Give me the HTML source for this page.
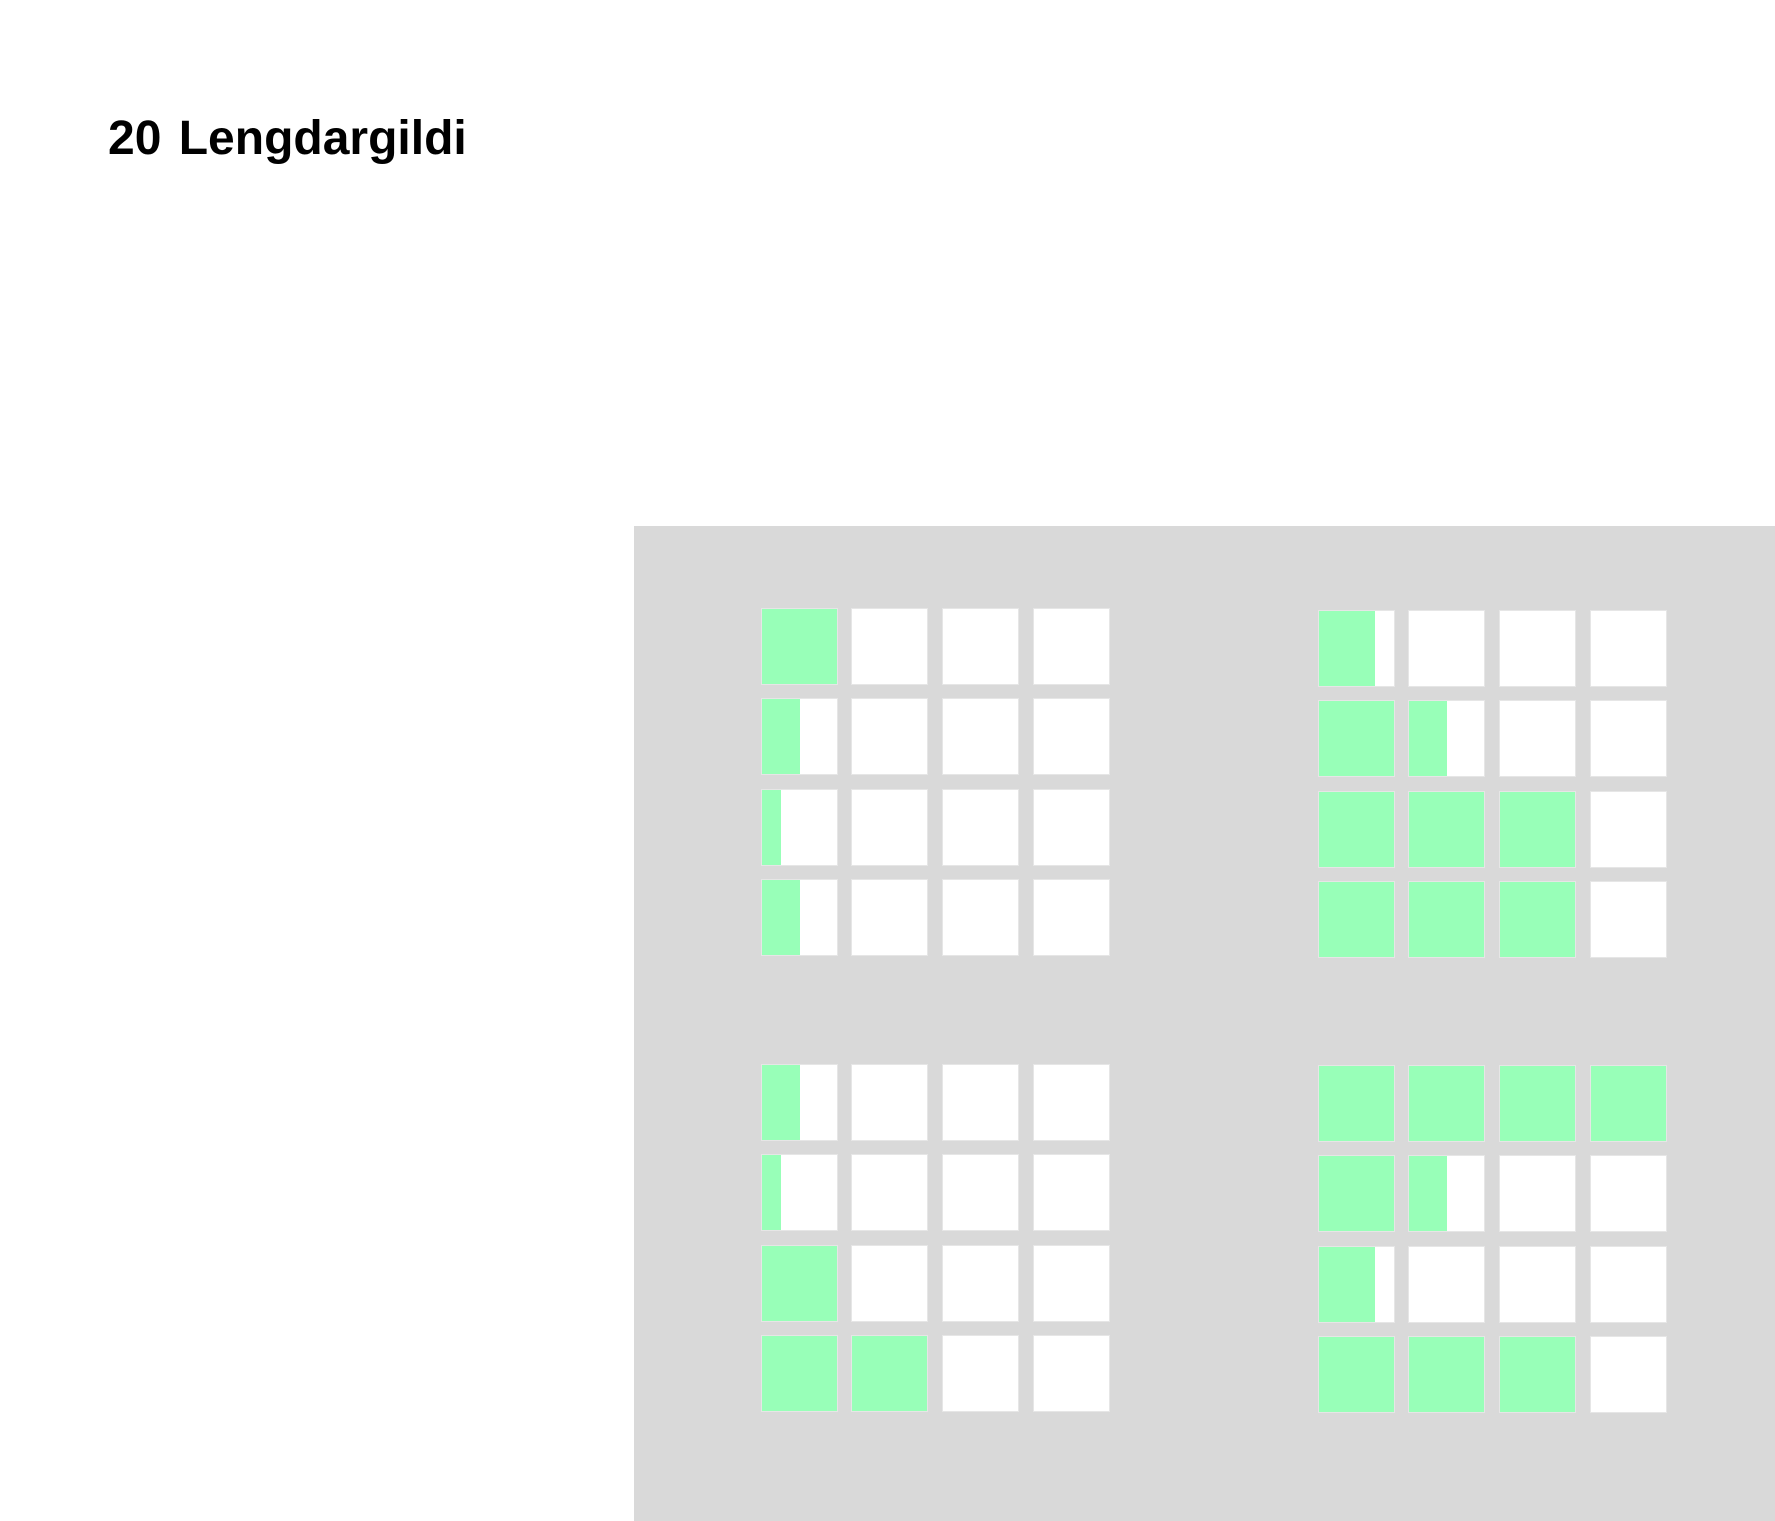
<!DOCTYPE html>
<html><head><meta charset="utf-8"><style>
html,body{margin:0;padding:0;background:#fff;width:1775px;height:1521px;overflow:hidden;position:relative}
h1{position:absolute;left:108px;top:109px;margin:0;font:bold 48px/60px "Liberation Sans",sans-serif;color:#000;word-spacing:4px}
.bg{position:absolute;left:634px;top:526px;right:0;bottom:0;background:#d9d9d9}
.g{position:absolute;width:360px;height:360px}
.c{position:absolute;width:77px;height:77px;background:#fff;box-sizing:border-box;border:1px solid #e6e6e6;overflow:hidden}
.c i{position:absolute;left:0;top:0;bottom:0;background:#98ffb8}
.c0{left:0}.c1{left:90px}.c2{left:181px}.c3{left:272px}
.r0{top:0}.r1{top:90px}.r2{top:181px}.r3{top:271px}
</style></head><body>
<h1>20 Lengdargildi</h1>
<div class="bg"></div>

<div class="g" style="left:761px;top:608px">
<div class="c c0 r0"><i style="width:100%"></i></div><div class="c c1 r0"></div><div class="c c2 r0"></div><div class="c c3 r0"></div>
<div class="c c0 r1"><i style="width:50%"></i></div><div class="c c1 r1"></div><div class="c c2 r1"></div><div class="c c3 r1"></div>
<div class="c c0 r2"><i style="width:25%"></i></div><div class="c c1 r2"></div><div class="c c2 r2"></div><div class="c c3 r2"></div>
<div class="c c0 r3"><i style="width:50%"></i></div><div class="c c1 r3"></div><div class="c c2 r3"></div><div class="c c3 r3"></div>
</div>

<div class="g" style="left:1318px;top:610px">
<div class="c c0 r0"><i style="width:75%"></i></div><div class="c c1 r0"></div><div class="c c2 r0"></div><div class="c c3 r0"></div>
<div class="c c0 r1"><i style="width:100%"></i></div><div class="c c1 r1"><i style="width:50%"></i></div><div class="c c2 r1"></div><div class="c c3 r1"></div>
<div class="c c0 r2"><i style="width:100%"></i></div><div class="c c1 r2"><i style="width:100%"></i></div><div class="c c2 r2"><i style="width:100%"></i></div><div class="c c3 r2"></div>
<div class="c c0 r3"><i style="width:100%"></i></div><div class="c c1 r3"><i style="width:100%"></i></div><div class="c c2 r3"><i style="width:100%"></i></div><div class="c c3 r3"></div>
</div>

<div class="g" style="left:761px;top:1064px">
<div class="c c0 r0"><i style="width:50%"></i></div><div class="c c1 r0"></div><div class="c c2 r0"></div><div class="c c3 r0"></div>
<div class="c c0 r1"><i style="width:25%"></i></div><div class="c c1 r1"></div><div class="c c2 r1"></div><div class="c c3 r1"></div>
<div class="c c0 r2"><i style="width:100%"></i></div><div class="c c1 r2"></div><div class="c c2 r2"></div><div class="c c3 r2"></div>
<div class="c c0 r3"><i style="width:100%"></i></div><div class="c c1 r3"><i style="width:100%"></i></div><div class="c c2 r3"></div><div class="c c3 r3"></div>
</div>

<div class="g" style="left:1318px;top:1065px">
<div class="c c0 r0"><i style="width:100%"></i></div><div class="c c1 r0"><i style="width:100%"></i></div><div class="c c2 r0"><i style="width:100%"></i></div><div class="c c3 r0"><i style="width:100%"></i></div>
<div class="c c0 r1"><i style="width:100%"></i></div><div class="c c1 r1"><i style="width:50%"></i></div><div class="c c2 r1"></div><div class="c c3 r1"></div>
<div class="c c0 r2"><i style="width:75%"></i></div><div class="c c1 r2"></div><div class="c c2 r2"></div><div class="c c3 r2"></div>
<div class="c c0 r3"><i style="width:100%"></i></div><div class="c c1 r3"><i style="width:100%"></i></div><div class="c c2 r3"><i style="width:100%"></i></div><div class="c c3 r3"></div>
</div>
</body></html>
